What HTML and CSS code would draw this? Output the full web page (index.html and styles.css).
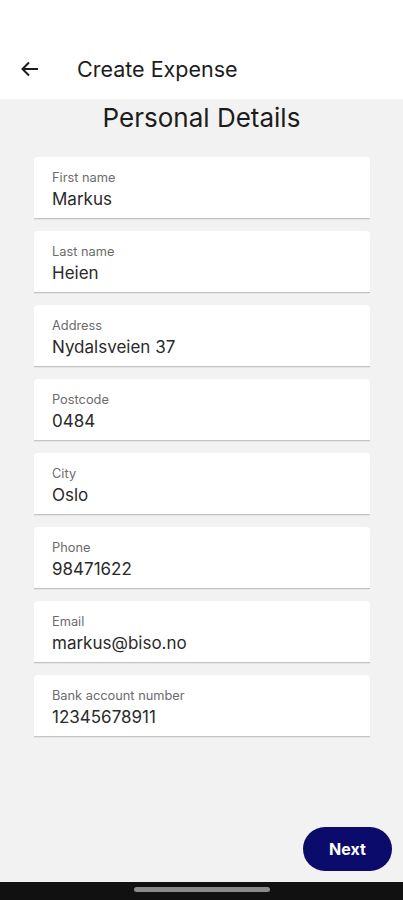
FILE: index.html
```html
<!DOCTYPE html>
<html lang="en">
<head>
<meta charset="utf-8">
<title>Create Expense</title>
<link rel="stylesheet" href="styles.css">
</head>
<body>
<div class="screen">
  <header class="appbar">
    <svg class="back" width="24" height="24" viewBox="0 0 24 24" aria-hidden="true">
      <path d="M20 12H4.5M11 5.5L4.5 12L11 18.5" fill="none" stroke="#1c1c1c" stroke-width="2" stroke-linecap="butt" stroke-linejoin="miter"/>
    </svg>
    <h1 class="appbar-title">Create Expense</h1>
  </header>
  <main class="content">
    <h2 class="section-title">Personal Details</h2>
    <div class="fields">
      <div class="field"><span class="label">First name</span><span class="value">Markus</span></div>
      <div class="field"><span class="label">Last name</span><span class="value">Heien</span></div>
      <div class="field"><span class="label">Address</span><span class="value">Nydalsveien 37</span></div>
      <div class="field"><span class="label">Postcode</span><span class="value">0484</span></div>
      <div class="field"><span class="label">City</span><span class="value">Oslo</span></div>
      <div class="field"><span class="label">Phone</span><span class="value">98471622</span></div>
      <div class="field"><span class="label">Email</span><span class="value">markus@biso.no</span></div>
      <div class="field"><span class="label">Bank account number</span><span class="value">12345678911</span></div>
    </div>
    <div class="actions">
      <button class="next">Next</button>
    </div>
  </main>
  <div class="navbar"><span class="handle"></span></div>
</div>
</body>
</html>
```
FILE: styles.css
```css
* { box-sizing: border-box; }
html, body { margin: 0; padding: 0; }
body {
  font-family: Inter, "Liberation Sans", sans-serif;
  background: #f2f2f2;
}
.screen {
  width: 403px;
  height: 900px;
  display: flex;
  flex-direction: column;
  overflow: hidden;
}
.appbar {
  height: 99px;
  background: #ffffff;
  display: flex;
  align-items: center;
  padding: 38px 0 0 18px;
  flex-shrink: 0;
}
.back { display: block; }
.appbar-title {
  margin: 0 0 0 35px;
  font-size: 21.5px;
  font-weight: 400;
  color: #1c1c1c;
}
.content {
  flex: 1;
  background: #f2f2f2;
  display: flex;
  flex-direction: column;
}
.section-title {
  margin: 0;
  height: 38px;
  line-height: 38px;
  text-align: center;
  font-size: 26px;
  font-weight: 400;
  color: #1c1c1c;
}
.fields {
  margin-top: 20px;
  display: flex;
  flex-direction: column;
  gap: 12px;
  padding: 0 33px 0 34px;
}
.field {
  height: 62px;
  background: #ffffff;
  border-radius: 4px 4px 0 0;
  border-bottom: 1px solid #c4c4c4;
  box-shadow: 0 1px 1px rgba(0, 0, 0, 0.06);
  display: flex;
  flex-direction: column;
  padding: 13px 0 0 18px;
}
.label {
  font-size: 12.8px;
  line-height: 15px;
  color: #6b6b6b;
}
.value {
  margin-top: 4px;
  font-size: 17px;
  line-height: 20px;
  color: #2a2a2a;
}
.actions {
  margin-top: auto;
  display: flex;
  justify-content: flex-end;
  padding: 0 11px 11px 0;
}
.next {
  width: 89px;
  height: 44px;
  border: none;
  border-radius: 22px;
  background: #0b0b6b;
  color: #ffffff;
  font-family: Inter, "Liberation Sans", sans-serif;
  font-size: 16px;
  font-weight: 700;
  padding: 0;
}
.navbar {
  height: 18px;
  background: #111111;
  display: flex;
  justify-content: center;
  padding-top: 5px;
  flex-shrink: 0;
}
.handle {
  width: 136px;
  height: 5px;
  border-radius: 3px;
  background: #8a8a8a;
}
```
